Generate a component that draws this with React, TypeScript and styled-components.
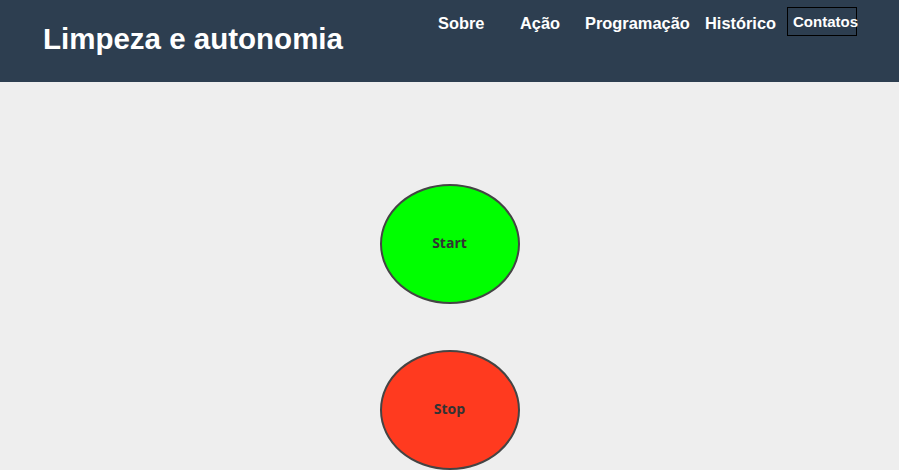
import React from "react";
import styled, { createGlobalStyle } from "styled-components";

const Global = createGlobalStyle`
  html, body { margin: 0; padding: 0; background: #eeeeee; }
  body { font-family: "Liberation Sans", Arial, sans-serif; }
`;

const Header = styled.header`
  height: 82px;
  background: #2d3e50;
  display: flex;
  justify-content: space-between;
  align-items: flex-start;
  box-sizing: border-box;
`;

const Title = styled.h1`
  margin: 0;
  padding: 21px 0 0 43px;
  font-family: "Liberation Sans", Arial, sans-serif;
  font-weight: 700;
  font-size: 29.5px;
  line-height: 36px;
  color: #ffffff;
`;

const Nav = styled.nav`
  display: flex;
  align-items: flex-start;
  padding: 7px 42px 0 0;
`;

const NavItem = styled.a<{ $w: number }>`
  width: ${(p) => p.$w}px;
  font-family: "Liberation Sans", Arial, sans-serif;
  font-weight: 700;
  font-size: 16.4px;
  line-height: 18px;
  padding-top: 7px;
  color: #ffffff;
  text-decoration: none;
  white-space: nowrap;
`;

const ContactBox = styled.a`
  border: 1px solid #000;
  width: 70px;
  height: 29px;
  box-sizing: border-box;
  padding: 6px 0 0 5px;
  font-family: "Liberation Sans", Arial, sans-serif;
  font-weight: 700;
  font-size: 15px;
  line-height: 16px;
  color: #ffffff;
  text-decoration: none;
  white-space: nowrap;
`;

const Main = styled.main`
  display: flex;
  flex-direction: column;
  align-items: center;
  padding-top: 102px;
  gap: 46px;
`;

const Round = styled.button<{ $bg: string }>`
  width: 140px;
  height: 120px;
  border-radius: 50%;
  border: 2px solid #444;
  background: ${(p) => p.$bg};
  color: #333;
  font-family: "Open Sans", "Noto Sans", sans-serif;
  font-weight: 700;
  font-size: 14px;
  padding: 0 0 3px 0;
  cursor: pointer;
`;

export default function App() {
  return (
    <>
      <Global />
      <Header>
        <Title>Limpeza e autonomia</Title>
        <Nav>
          <NavItem $w={82}>Sobre</NavItem>
          <NavItem $w={65}>Ação</NavItem>
          <NavItem $w={120}>Programação</NavItem>
          <NavItem $w={82}>Histórico</NavItem>
          <ContactBox>Contatos</ContactBox>
        </Nav>
      </Header>
      <Main>
        <Round $bg="#00ff00">Start</Round>
        <Round $bg="#ff3a1f">Stop</Round>
      </Main>
    </>
  );
}
